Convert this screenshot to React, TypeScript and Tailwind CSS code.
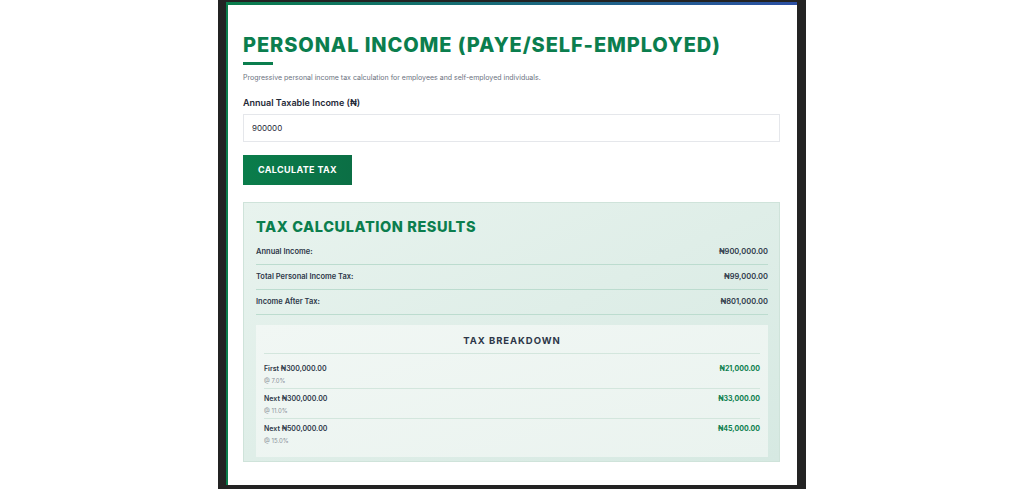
const rows = [
  { label: "Annual Income:", value: "₦900,000.00" },
  { label: "Total Personal Income Tax:", value: "₦99,000.00" },
  { label: "Income After Tax:", value: "₦801,000.00" },
];

const bands = [
  { name: "First ₦300,000.00", rate: "@ 7.0%", tax: "₦21,000.00" },
  { name: "Next ₦300,000.00", rate: "@ 11.0%", tax: "₦33,000.00" },
  { name: "Next ₦500,000.00", rate: "@ 15.0%", tax: "₦45,000.00" },
];

export default function App() {
  return (
    <div
      className="w-[1024px] h-[489px] bg-white flex justify-center overflow-hidden"
      style={{ fontFamily: "Inter, 'Noto Sans', 'DejaVu Sans', sans-serif" }}
    >
      <div className="w-[588px] h-full bg-[#232323] pl-[8px] pr-[9px] pt-[2px] pb-[4px]">
        <div className="h-full bg-white border-l-[2px] border-[#0a7d4b] flex flex-col overflow-hidden">
          {/* top accent */}
          <div className="h-[3px] shrink-0 bg-gradient-to-r from-[#0a7d4b] to-[#2c4fa3]" />

          <div className="pl-[15px] pr-[17px] pt-[27px] flex flex-col">
            <h1 className="whitespace-nowrap text-[20px] leading-[26px] font-extrabold tracking-[0.045em] text-[#0b7e4e]">
              PERSONAL INCOME (PAYE/SELF-EMPLOYED)
            </h1>
            <div className="mt-[4px] h-[3px] w-[30px] bg-[#0b7e4e]" />

            <p className="mt-[6px] text-[7px] leading-[14px] text-[#6b7280]">
              Progressive personal income tax calculation for employees and self-employed individuals.
            </p>

            <label className="mt-[10px] text-[9px] leading-[16px] font-semibold text-[#1f2937]">
              Annual Taxable Income (₦)
            </label>
            <div className="mt-[3px] h-[28px] border border-[#e5e7eb] flex items-center px-[8px] text-[8px] text-[#1f2937]">
              900000
            </div>

            <button className="mt-[13px] h-[30px] w-[109px] bg-gradient-to-r from-[#0a7d4b] to-[#0b6f45] text-white text-[9px] font-bold tracking-[0.04em]">
              CALCULATE TAX
            </button>

            {/* results */}
            <div className="mt-[17px] h-[260px] border border-[#cfe3da] bg-gradient-to-br from-[#e8f3ee] to-[#d6e9e2] pl-[12px] pr-[11px] pt-[14px] flex flex-col">
              <h2 className="text-[14.5px] leading-[20px] font-extrabold tracking-[0.04em] text-[#0b7e4e]">
                TAX CALCULATION RESULTS
              </h2>
              <div className="mt-[3px] flex flex-col">
                {rows.map((r) => (
                  <div
                    key={r.label}
                    className="h-[25px] flex items-center justify-between border-b border-[#bcdccf] text-[7.5px] font-semibold text-[#2d3748]"
                  >
                    <span>{r.label}</span>
                    <span>{r.value}</span>
                  </div>
                ))}
              </div>

              {/* breakdown */}
              <div className="mt-[10px] h-[132px] bg-gradient-to-br from-[#f1f7f4] to-[#eaf3ef] px-[8px] pt-[9px] flex flex-col">
                <div className="pb-[5px] border-b border-[#d3e6dd] text-center text-[9.5px] leading-[14px] font-bold tracking-[0.1em] text-[#2d3748]">
                  TAX BREAKDOWN
                </div>
                <div className="mt-[5px] flex flex-col">
                  {bands.map((b, i) => (
                    <div
                      key={b.name}
                      className={
                        "flex items-start justify-between pt-[5px] pb-[3.5px] " +
                        (i < bands.length - 1 ? "border-b border-[#d3e6dd]" : "")
                      }
                    >
                      <div className="flex flex-col">
                        <span className="text-[7px] leading-[10px] font-semibold text-[#2d3748]">
                          {b.name}
                        </span>
                        <span className="mt-[1.5px] text-[6px] leading-[9px] text-[#8a9099]">
                          {b.rate}
                        </span>
                      </div>
                      <span className="text-[7px] leading-[10px] font-bold text-[#0b7e4e]">
                        {b.tax}
                      </span>
                    </div>
                  ))}
                </div>
              </div>
            </div>
          </div>
        </div>
      </div>
    </div>
  );
}
